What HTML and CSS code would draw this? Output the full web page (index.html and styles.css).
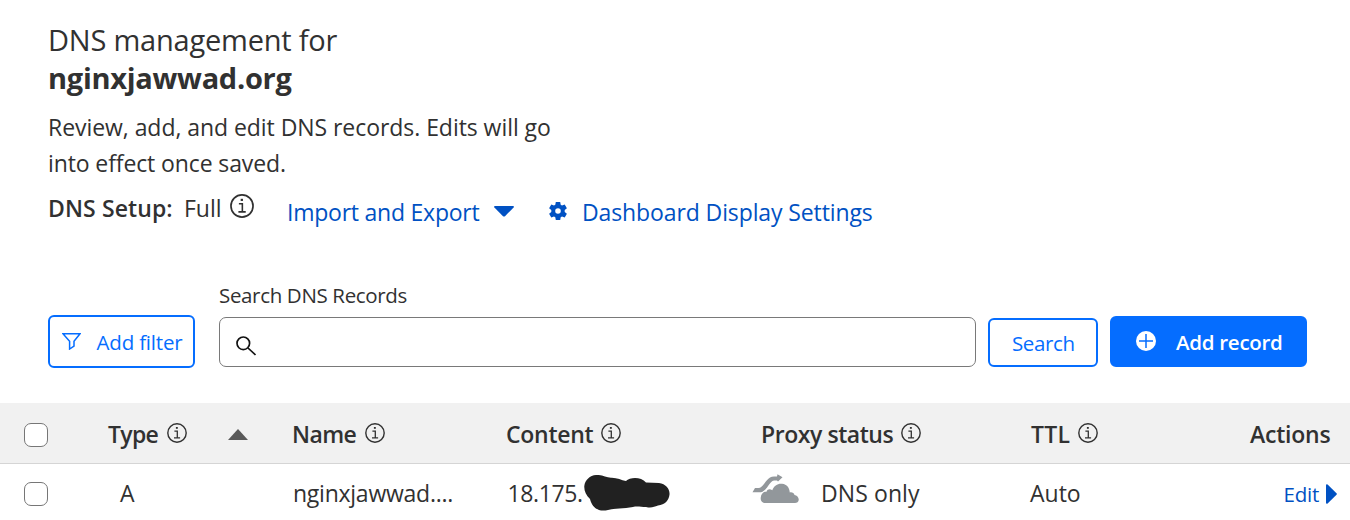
FILE: index.html
```html
<!DOCTYPE html>
<html lang="en">
<head>
<meta charset="utf-8">
<title>DNS management</title>
<link rel="stylesheet" href="styles.css">
</head>
<body>
<svg class="defs" width="0" height="0" aria-hidden="true">
  <symbol id="info" viewBox="0 0 20 20">
    <circle cx="10" cy="10" r="9.2" fill="none" stroke="currentColor" stroke-width="1.4"/>
    <rect x="8.9" y="4" width="1.9" height="1.800" fill="currentColor"/>
    <path d="M7.400 8.200h2.900v6.600M7 14.900h6.100" fill="none" stroke="currentColor" stroke-width="1.3"/>
  </symbol>
</svg>
<header class="intro">
  <h1 class="title"><span class="title-light">DNS management for</span><span class="title-bold">nginxjawwad.org</span></h1>
  <p class="lead"><span class="lead-first">Review, add, and edit DNS records. Edits will go</span><span class="lead-second">into effect once saved.</span></p>
  <div class="setup">
    <strong class="setup-label">DNS Setup:</strong>
    <span class="setup-value">Full</span>
    <svg class="info-large"><use href="#info"/></svg>
    <a class="link import">Import and Export</a>
    <svg class="caret" viewBox="0 0 20 11"><path d="M1 0h18q1.500.4.6 1.400L11 10.200q-1 .8-2 0L.4 1.400Q-.5.400 1 0z"/></svg>
    <svg class="gear" viewBox="-9 -9 18 18"><path fill-rule="evenodd" d="M-2.200-9H2.200L2.700-6.200L4-5.400L6.700-6.400L8.900-2.700L6.700-.9V.9L8.900 2.700L6.700 6.400L4 5.400L2.700 6.200L2.200 9H-2.200L-2.700 6.200L-4 5.400L-6.700 6.400L-8.900 2.700L-6.700 .9V-.9L-8.900-2.700L-6.700-6.400L-4-5.400L-2.700-6.200zM0-2.800A2.800 2.800 0 1 0 0 2.800A2.800 2.800 0 1 0 0-2.800z"/></svg>
    <a class="link display">Dashboard Display Settings</a>
  </div>
</header>
<section class="toolbar">
  <button class="btn filter-btn">
    <svg class="filter-icon" viewBox="0 0 19 17"><path d="M1 .8h17L12 8.200v4.800l-4.400 3V8.200z"/></svg>
    <span>Add filter</span>
  </button>
  <div class="search-field">
    <label class="search-label" for="q">Search DNS Records</label>
    <div class="search-box">
      <svg class="search-icon" viewBox="0 0 20 20"><circle cx="7.300" cy="7.300" r="6.300"/><path d="M12 12l7.500 7"/></svg>
      <input class="search-input" id="q" type="text">
    </div>
  </div>
  <button class="btn search-btn">Search</button>
  <button class="btn add-btn">
    <svg class="plus-icon" viewBox="0 0 20 20"><circle cx="10" cy="10" r="10"/><path d="M10 3v14M3 10h14"/></svg>
    <span>Add record</span>
  </button>
</section>
<main class="table">
  <div class="row head">
    <div class="cell"><input class="check" type="checkbox"></div>
    <div class="cell type-head"><span class="t-type">Type</span><svg class="info"><use href="#info"/></svg><svg class="sort" viewBox="0 0 20 11"><path d="M10 0L20 11H0z"/></svg></div>
    <div class="cell name-head"><span class="t-name">Name</span><svg class="info"><use href="#info"/></svg></div>
    <div class="cell content-head"><span class="t-content">Content</span><svg class="info"><use href="#info"/></svg></div>
    <div class="cell proxy-head"><span class="t-proxy">Proxy status</span><svg class="info"><use href="#info"/></svg></div>
    <div class="cell ttl-head"><span class="t-ttl">TTL</span><svg class="info"><use href="#info"/></svg></div>
    <div class="cell"><span class="t-actions">Actions</span></div>
  </div>
  <div class="row record">
    <div class="cell"><input class="check" type="checkbox"></div>
    <div class="cell type-value">A</div>
    <div class="cell name-value">nginxjawwad....</div>
    <div class="cell content-value"><span>18.175.</span>
      <svg class="redaction" viewBox="0 0 86 36"><path d="M12 0C18-.5 22 2.500 27 2.800C33 2.500 37 5.300 42 6C46 2 57 1.500 62 7.500L75 8C82 9 86 14 85.500 19.500C85 25 81 30 74 30.500C70 31.500 68 33.500 62 32C57 32 53 31 49 32C40 33.500 30 33.500 24 35C14 37.500 8 32 6 24C2 20 0 16 .3 11C1 5 6 .5 12 0z"/></svg>
    </div>
    <div class="cell proxy-value">
      <svg class="cloud" viewBox="0 0 48 30"><path d="M.500 18.300L3 14H6.500C12 14 14 2.500 22 2.500H25L25.500 .2L30.500 3.200L26 7.500L25 6.500H22C17 7 15 18.300 7.500 18.300z"/><path d="M13.500 29C10 29 8.500 27 8.700 24C9 19 12 17.500 14.500 17.800C15.500 15 18 14.800 20.300 16.300C22 11.500 26 9.300 30 9.800C35 10.300 37.500 14 37.800 18.500C40 18 42 19 42.500 21C45 21.500 47 23.500 46.700 26C46.500 28 45 29 43 29z"/></svg>
      <span>DNS only</span>
    </div>
    <div class="cell ttl-value">Auto</div>
    <div class="cell edit-cell"><a class="edit">Edit</a><svg class="edit-arrow" viewBox="0 0 11 20"><path d="M0 1.200Q.3-.5 1.600.6L10.500 9.300Q11.200 10 10.500 10.700L1.600 19.400Q.3 20.500 0 18.800z"/></svg></div>
  </div>
</main>
</body>
</html>
```
FILE: styles.css
```css
* { box-sizing: border-box; }
body {
  margin: 0;
  background: #fff;
  color: #313131;
  font: 400 23px/36px "Open Sans", "Noto Sans", sans-serif;
  white-space: nowrap;
  overflow: hidden;
}
.defs { position: absolute; }
svg { display: block; flex: none; }
button, input { margin: 0; font: inherit; }

.intro { padding: 21px 0 0 48px; }
.title { margin: 0 0 12px; font-size: 29px; line-height: 38px; }
.title span, .lead span { display: block; }
.title-light { font-weight: 400; letter-spacing: -0.217px; }
.title-bold { font-weight: 700; letter-spacing: -0.278px; }
.lead { margin: 0 0 9px; }
.lead-first { letter-spacing: -0.054px; }
.lead-second { letter-spacing: -0.113px; }

.setup { display: flex; height: 40px; align-items: flex-start; }
.setup-label { width: 136px; font-weight: 600; letter-spacing: 0.1px; }
.setup-value { width: 46px; letter-spacing: 0; }
.info-large { width: 24px; height: 24px; margin: 4px 33px 0 0; }
.link { margin-top: 4px; color: #0051c3; }
.import { width: 207px; letter-spacing: -0.235px; }
.display { letter-spacing: -0.11px; }
.caret { width: 20px; height: 11px; margin: 16px 35px 0 0; fill: #0051c3; }
.gear { width: 18px; height: 18px; margin: 12px 15px 0 0; fill: #0051c3; }

.toolbar {
  display: flex;
  align-items: flex-end;
  height: 138px;
  padding: 0 43px 0 48px;
  font-size: 20.5px;
  line-height: 28px;
}
.btn {
  display: flex;
  align-items: center;
  padding: 0;
  border: 2px solid #056dff;
  border-radius: 6px;
  background: #fff;
  color: #056dff;
}
.filter-btn { width: 147px; height: 53px; padding: 0 0 0 12px; letter-spacing: -0.18px; }
.filter-icon { width: 19px; height: 17px; margin-right: 15.5px; fill: none; stroke: #056dff; stroke-width: 1.5; }
.search-field { width: 757px; margin: 0 12px 1px 24px; }
.search-label { display: block; margin-bottom: 8px; letter-spacing: -0.34px; }
.search-box {
  display: flex;
  align-items: center;
  height: 50px;
  padding: 7px 12px 0 16px;
  border: 1px solid #797979;
  border-radius: 7px;
}
.search-icon { width: 20px; height: 20px; fill: none; stroke: #111; stroke-width: 1.7; }
.search-input { flex: 1; margin-left: 10px; border: 0; outline: 0; background: none; }
.search-btn { width: 110px; height: 49px; margin: 0 12px 1px 0; padding: 1px 0 0 22px; letter-spacing: -0.368px; }
.add-btn {
  width: 197px;
  height: 51px;
  margin-bottom: 1px;
  padding: 1px 0 0 24px;
  background: #056dff;
  color: #fff;
  font-weight: 600;
  letter-spacing: -0.28px;
}
.plus-icon { width: 20px; height: 20px; margin: -2px 20px 0 0; fill: #fff; stroke: #056dff; stroke-width: 1.5; }
.plus-icon circle { stroke: none; }

.row {
  display: grid;
  grid-template-columns: 84px 183px 214px 247px 278px 220px 100px;
  padding-left: 24px;
}
.head {
  height: 61px;
  margin-top: 35px;
  padding-top: 13px;
  border-bottom: 1px solid #d5d5d5;
  background: #f1f1f1;
  font-weight: 600;
}
.record { height: 56px; padding-top: 11px; }
.cell { display: flex; align-items: flex-start; height: 36px; }
.check {
  appearance: none;
  width: 24px;
  height: 24px;
  margin-top: 7px;
  border: 1px solid #767676;
  border-radius: 7px;
  background: #fff;
}
.info { width: 20px; height: 20px; margin-top: 7px; }
.sort { width: 20px; height: 11px; margin: 13px 0 0 41px; fill: #595959; }
.t-type { width: 59px; letter-spacing: -0.707px; }
.t-name { width: 73px; letter-spacing: -0.6px; }
.t-content { width: 95px; letter-spacing: -0.281px; }
.t-proxy { width: 140px; letter-spacing: -0.445px; }
.t-ttl { width: 47px; letter-spacing: 0.256px; }
.t-actions { letter-spacing: -0.214px; }
.name-head, .content-head { padding-left: 1px; }
.proxy-head { padding-left: 9px; }
.ttl-head { padding-left: 1px; }
.type-value { padding-left: 12px; }
.name-value { padding-left: 2px; letter-spacing: -0.25px; }
.content-value { padding-left: 2.5px; letter-spacing: -0.383px; }
.content-value span { width: 76.5px; }
.redaction { width: 86px; height: 36px; fill: #212121; }
.cloud { width: 48px; height: 30px; margin: -1px 21px 0 0; fill: #92979b; }
.proxy-value { letter-spacing: 0.094px; }
.edit-cell { padding-left: 33.5px; }
.edit { width: 42.5px; color: #0051c3; font-size: 20.5px; letter-spacing: -0.203px; margin-top: 1px; }
.edit-arrow { width: 11px; height: 20px; margin-top: 9px; fill: #0051c3; }
```
